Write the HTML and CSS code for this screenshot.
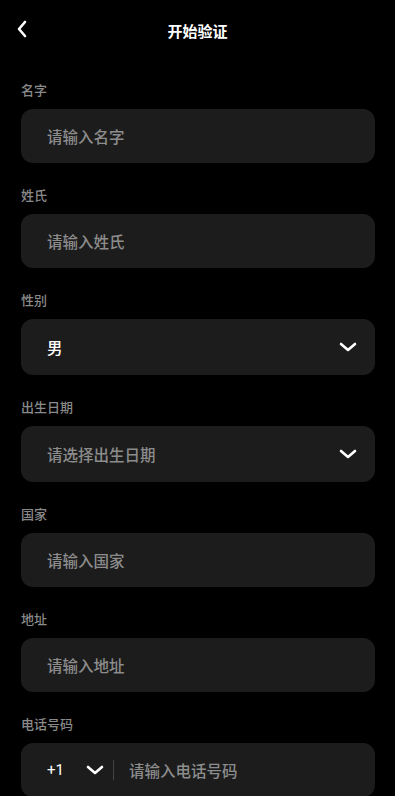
FILE: index.html
```html
<!DOCTYPE html>
<html lang="zh-CN">
<head>
    <meta charset="UTF-8">
    <meta name="viewport" content="width=device-width, initial-scale=1.0">
    <title>开始验证</title>
    <link rel="stylesheet" href="styles.css">
</head>
<body>
    <div class="header">
        <svg class="back" width="14" height="18" viewBox="0 0 14 18"><path d="M10 2 L4 9 L10 16" fill="none" stroke="#fff" stroke-width="2.6" stroke-linecap="round" stroke-linejoin="round"/></svg>
        <div class="title">开始验证</div>
    </div>

    <div class="form">
        <div class="field">
            <div class="label">名字</div>
            <div class="box"><span class="ph">请输入名字</span></div>
        </div>
        <div class="field">
            <div class="label">姓氏</div>
            <div class="box"><span class="ph">请输入姓氏</span></div>
        </div>
        <div class="field">
            <div class="label">性别</div>
            <div class="box select">
                <span class="val">男</span>
                <svg class="chev" width="20" height="12" viewBox="0 0 20 12"><path d="M3 3 L10 9 L17 3" fill="none" stroke="#fff" stroke-width="2.6" stroke-linecap="round" stroke-linejoin="round"/></svg>
            </div>
        </div>
        <div class="field">
            <div class="label">出生日期</div>
            <div class="box select">
                <span class="ph">请选择出生日期</span>
                <svg class="chev" width="20" height="12" viewBox="0 0 20 12"><path d="M3 3 L10 9 L17 3" fill="none" stroke="#fff" stroke-width="2.6" stroke-linecap="round" stroke-linejoin="round"/></svg>
            </div>
        </div>
        <div class="field">
            <div class="label">国家</div>
            <div class="box"><span class="ph">请输入国家</span></div>
        </div>
        <div class="field">
            <div class="label">地址</div>
            <div class="box"><span class="ph">请输入地址</span></div>
        </div>
        <div class="field">
            <div class="label">电话号码</div>
            <div class="box phone">
                <span class="code">+1</span>
                <svg class="chev" width="20" height="12" viewBox="0 0 20 12"><path d="M3 3 L10 9 L17 3" fill="none" stroke="#fff" stroke-width="2.6" stroke-linecap="round" stroke-linejoin="round"/></svg>
                <span class="divider"></span>
                <span class="ph">请输入电话号码</span>
            </div>
        </div>
    </div>
</body>
</html>
```

FILE: styles.css
```css
body{
    margin: 0;
    background: #000;
    color: #fff;
    font-family: Roboto, "Noto Sans CJK SC", sans-serif;
}
.header{
    height: 60px;
    display: flex;
    align-items: center;
    justify-content: center;
    position: relative;
}
.back{
    position: absolute;
    left: 15px;
    top: 20px;
}
.title{
    font-size: 15px;
    font-weight: 700;
}
.form{
    padding: 0 20px 0 21px;
}
.field{
    margin-top: 22px;
}
.field + .field{
    margin-top: 24px;
}
.label{
    font-size: 13px;
    font-weight: 500;
    color: #8a8a8a;
    line-height: 18px;
    margin-bottom: 9px;
}
.box{
    height: 54px;
    background: #1c1c1c;
    border-radius: 12px;
    display: flex;
    align-items: center;
    padding: 0 17px 0 26px;
    font-size: 15.5px;
}
.select{
    height: 56px;
    justify-content: space-between;
}
.ph{
    color: #8c8c8c;
    font-weight: 500;
}
.val{
    color: #fff;
    font-weight: 500;
}
.code{
    color: #fff;
    font-size: 15px;
    width: 38px;
}
.divider{
    width: 1px;
    height: 20px;
    background: #444;
    margin: 0 15px 0 8px;
}
```
